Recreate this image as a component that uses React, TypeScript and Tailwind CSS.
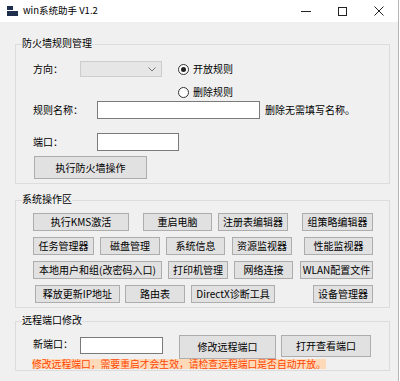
import React from 'react';

type Btn = { label: string; cls: string };

// 系统操作区 buttons, one array per row (margins follow the WinForms layout)
const opRows: Btn[][] = [
  [
    { label: '执行KMS激活', cls: 'ml-[17px] w-[96px]' },
    { label: '重启电脑', cls: 'ml-[14px] w-[69px]' },
    { label: '注册表编辑器', cls: 'ml-[6px] w-[70px]' },
    { label: '组策略编辑器', cls: 'ml-[14px] w-[71px]' },
  ],
  [
    { label: '任务管理器', cls: 'ml-[17px] w-[61px]' },
    { label: '磁盘管理', cls: 'ml-[6px] w-[60px]' },
    { label: '系统信息', cls: 'ml-[6px] w-[59px]' },
    { label: '资源监视器', cls: 'ml-[7px] w-[60px]' },
    { label: '性能监视器', cls: 'ml-[12px] w-[69px]' },
  ],
  [
    { label: '本地用户和组(改密码入口)', cls: 'ml-[17px] w-[129px]' },
    { label: '打印机管理', cls: 'ml-[6px] w-[60px]' },
    { label: '网络连接', cls: 'ml-[6px] w-[59px]' },
    { label: 'WLAN配置文件', cls: 'ml-[7px] w-[73px]' },
  ],
  [
    { label: '释放更新IP地址', cls: 'ml-[19px] w-[85px]' },
    { label: '路由表', cls: 'ml-[5px] w-[60px]' },
    { label: 'DirectX诊断工具', cls: 'ml-[6px] w-[84px]' },
    { label: '设备管理器', cls: 'ml-[38px] w-[60px]' },
  ],
];

function Button({ label, className }: { label: string; className: string }) {
  return (
    <div
      className={`flex items-center justify-center border border-[#adadad] bg-[#e1e1e1] leading-none whitespace-nowrap ${className}`}
    >
      {label}
    </div>
  );
}

function GroupBox({ title, className, children }: { title: string; className: string; children: React.ReactNode }) {
  return (
    <div className={`relative w-[375px] border border-[#dcdcdc] ${className}`}>
      <span className="absolute -top-[8px] left-[6px] bg-[#f0f0f0] leading-[12px]">{title}</span>
      {children}
    </div>
  );
}

function Radio({ checked }: { checked?: boolean }) {
  return (
    <span className="flex h-[11px] w-[11px] items-center justify-center rounded-full border border-[#333333] bg-white">
      {checked && <span className="h-[5px] w-[5px] rounded-full bg-[#222222]" />}
    </span>
  );
}

export default function App() {
  return (
    <div className="h-[381px] w-[400px] bg-white font-['Noto_Sans_CJK_SC',sans-serif] text-[10px] text-black">
      <div className="flex h-[381px] w-[399px] flex-col border-r border-[#b4b4b4]">
        {/* title bar */}
        <div className="flex h-[22px] items-center bg-white">
          <svg className="ml-[7px]" width="11" height="10" viewBox="0 0 11 10">
            <rect x="0" y="0" width="6" height="4" fill="#1e2f4d" />
            <rect x="0" y="5" width="11" height="5" fill="#1e2f4d" />
          </svg>
          <span className="ml-[5px] text-[9.5px] leading-none">win系统助手 V1.2</span>
          <div className="ml-auto flex h-full items-center">
            <div className="flex w-[36px] justify-center">
              <svg width="10" height="10" viewBox="0 0 10 10">
                <line x1="0" y1="5.5" x2="10" y2="5.5" stroke="#222" strokeWidth="1" />
              </svg>
            </div>
            <div className="flex w-[36px] justify-center">
              <svg width="9" height="9" viewBox="0 0 9 9">
                <rect x="0.5" y="0.5" width="8" height="8" fill="none" stroke="#222" strokeWidth="1" />
              </svg>
            </div>
            <div className="flex w-[38px] justify-center">
              <svg width="10" height="10" viewBox="0 0 10 10">
                <path d="M0.5 0.5L9.5 9.5M9.5 0.5L0.5 9.5" stroke="#222" strokeWidth="1" />
              </svg>
            </div>
          </div>
        </div>

        {/* body */}
        <div className="flex flex-1 flex-col bg-[#f0f0f0] pl-[15px] pt-[22px]">
          {/* firewall */}
          <GroupBox title="防火墙规则管理" className="h-[140px]">
            <div className="flex flex-col pt-[16px]">
              <div className="flex h-[16px] items-center">
                <span className="ml-[17px] w-[47px] leading-none">方向：</span>
                <div className="flex h-[16px] w-[82px] items-center justify-end border border-[#cccccc] bg-[#e6e6e6] pr-[5px]">
                  <svg width="8" height="5" viewBox="0 0 8 5">
                    <path d="M0.5 0.5L4 4L7.5 0.5" fill="none" stroke="#777" strokeWidth="1" />
                  </svg>
                </div>
                <span className="ml-[16px] flex items-center">
                  <Radio checked />
                  <span className="ml-[4px] leading-none">开放规则</span>
                </span>
              </div>
              <div className="mt-[9px] flex h-[12px] items-center">
                <span className="ml-[162px] flex items-center">
                  <Radio />
                  <span className="ml-[4px] leading-none">删除规则</span>
                </span>
              </div>
              <div className="mt-[3px] flex h-[18px] items-center">
                <span className="ml-[17px] w-[64px] leading-none">规则名称：</span>
                <div className="h-[18px] w-[163px] border border-[#7a7a7a] bg-white" />
                <span className="ml-[5px] leading-none">删除无需填写名称。</span>
              </div>
              <div className="mt-[14px] flex h-[18px] items-center">
                <span className="ml-[17px] w-[64px] leading-none">端口：</span>
                <div className="h-[18px] w-[82px] border border-[#7a7a7a] bg-white" />
              </div>
              <div className="mt-[5px] flex">
                <Button label="执行防火墙操作" className="ml-[18px] h-[23px] w-[113px]" />
              </div>
            </div>
          </GroupBox>

          {/* system operations */}
          <GroupBox title="系统操作区" className="mt-[16px] h-[108px]">
            <div className="flex flex-col gap-[6px] pt-[12px]">
              {opRows.map((row, i) => (
                <div key={i} className="flex h-[18px]">
                  {row.map(b => (
                    <Button key={b.label} label={b.label} className={`h-[18px] ${b.cls}`} />
                  ))}
                </div>
              ))}
            </div>
          </GroupBox>

          {/* remote port */}
          <GroupBox title="远程端口修改" className="mt-[13px] h-[50px]">
            <div className="flex flex-col pt-[13px]">
              <div className="flex items-start">
                <span className="ml-[17px] mt-[4px] w-[47px] leading-none">新端口：</span>
                <div className="mt-[2px] h-[17px] w-[83px] border border-[#7a7a7a] bg-white" />
                <Button label="修改远程端口" className="ml-[16px] h-[24px] w-[97px]" />
                <Button label="打开查看端口" className="ml-[5px] h-[22px] w-[90px]" />
              </div>
              <div className="flex">
                <span className="ml-[16px] bg-[#ffdab9] text-[9.8px] leading-[10px] text-[#ff4500]">
                  修改远程端口，需要重启才会生效，请检查远程端口是否自动开放。
                </span>
              </div>
            </div>
          </GroupBox>
        </div>
      </div>
    </div>
  );
}
